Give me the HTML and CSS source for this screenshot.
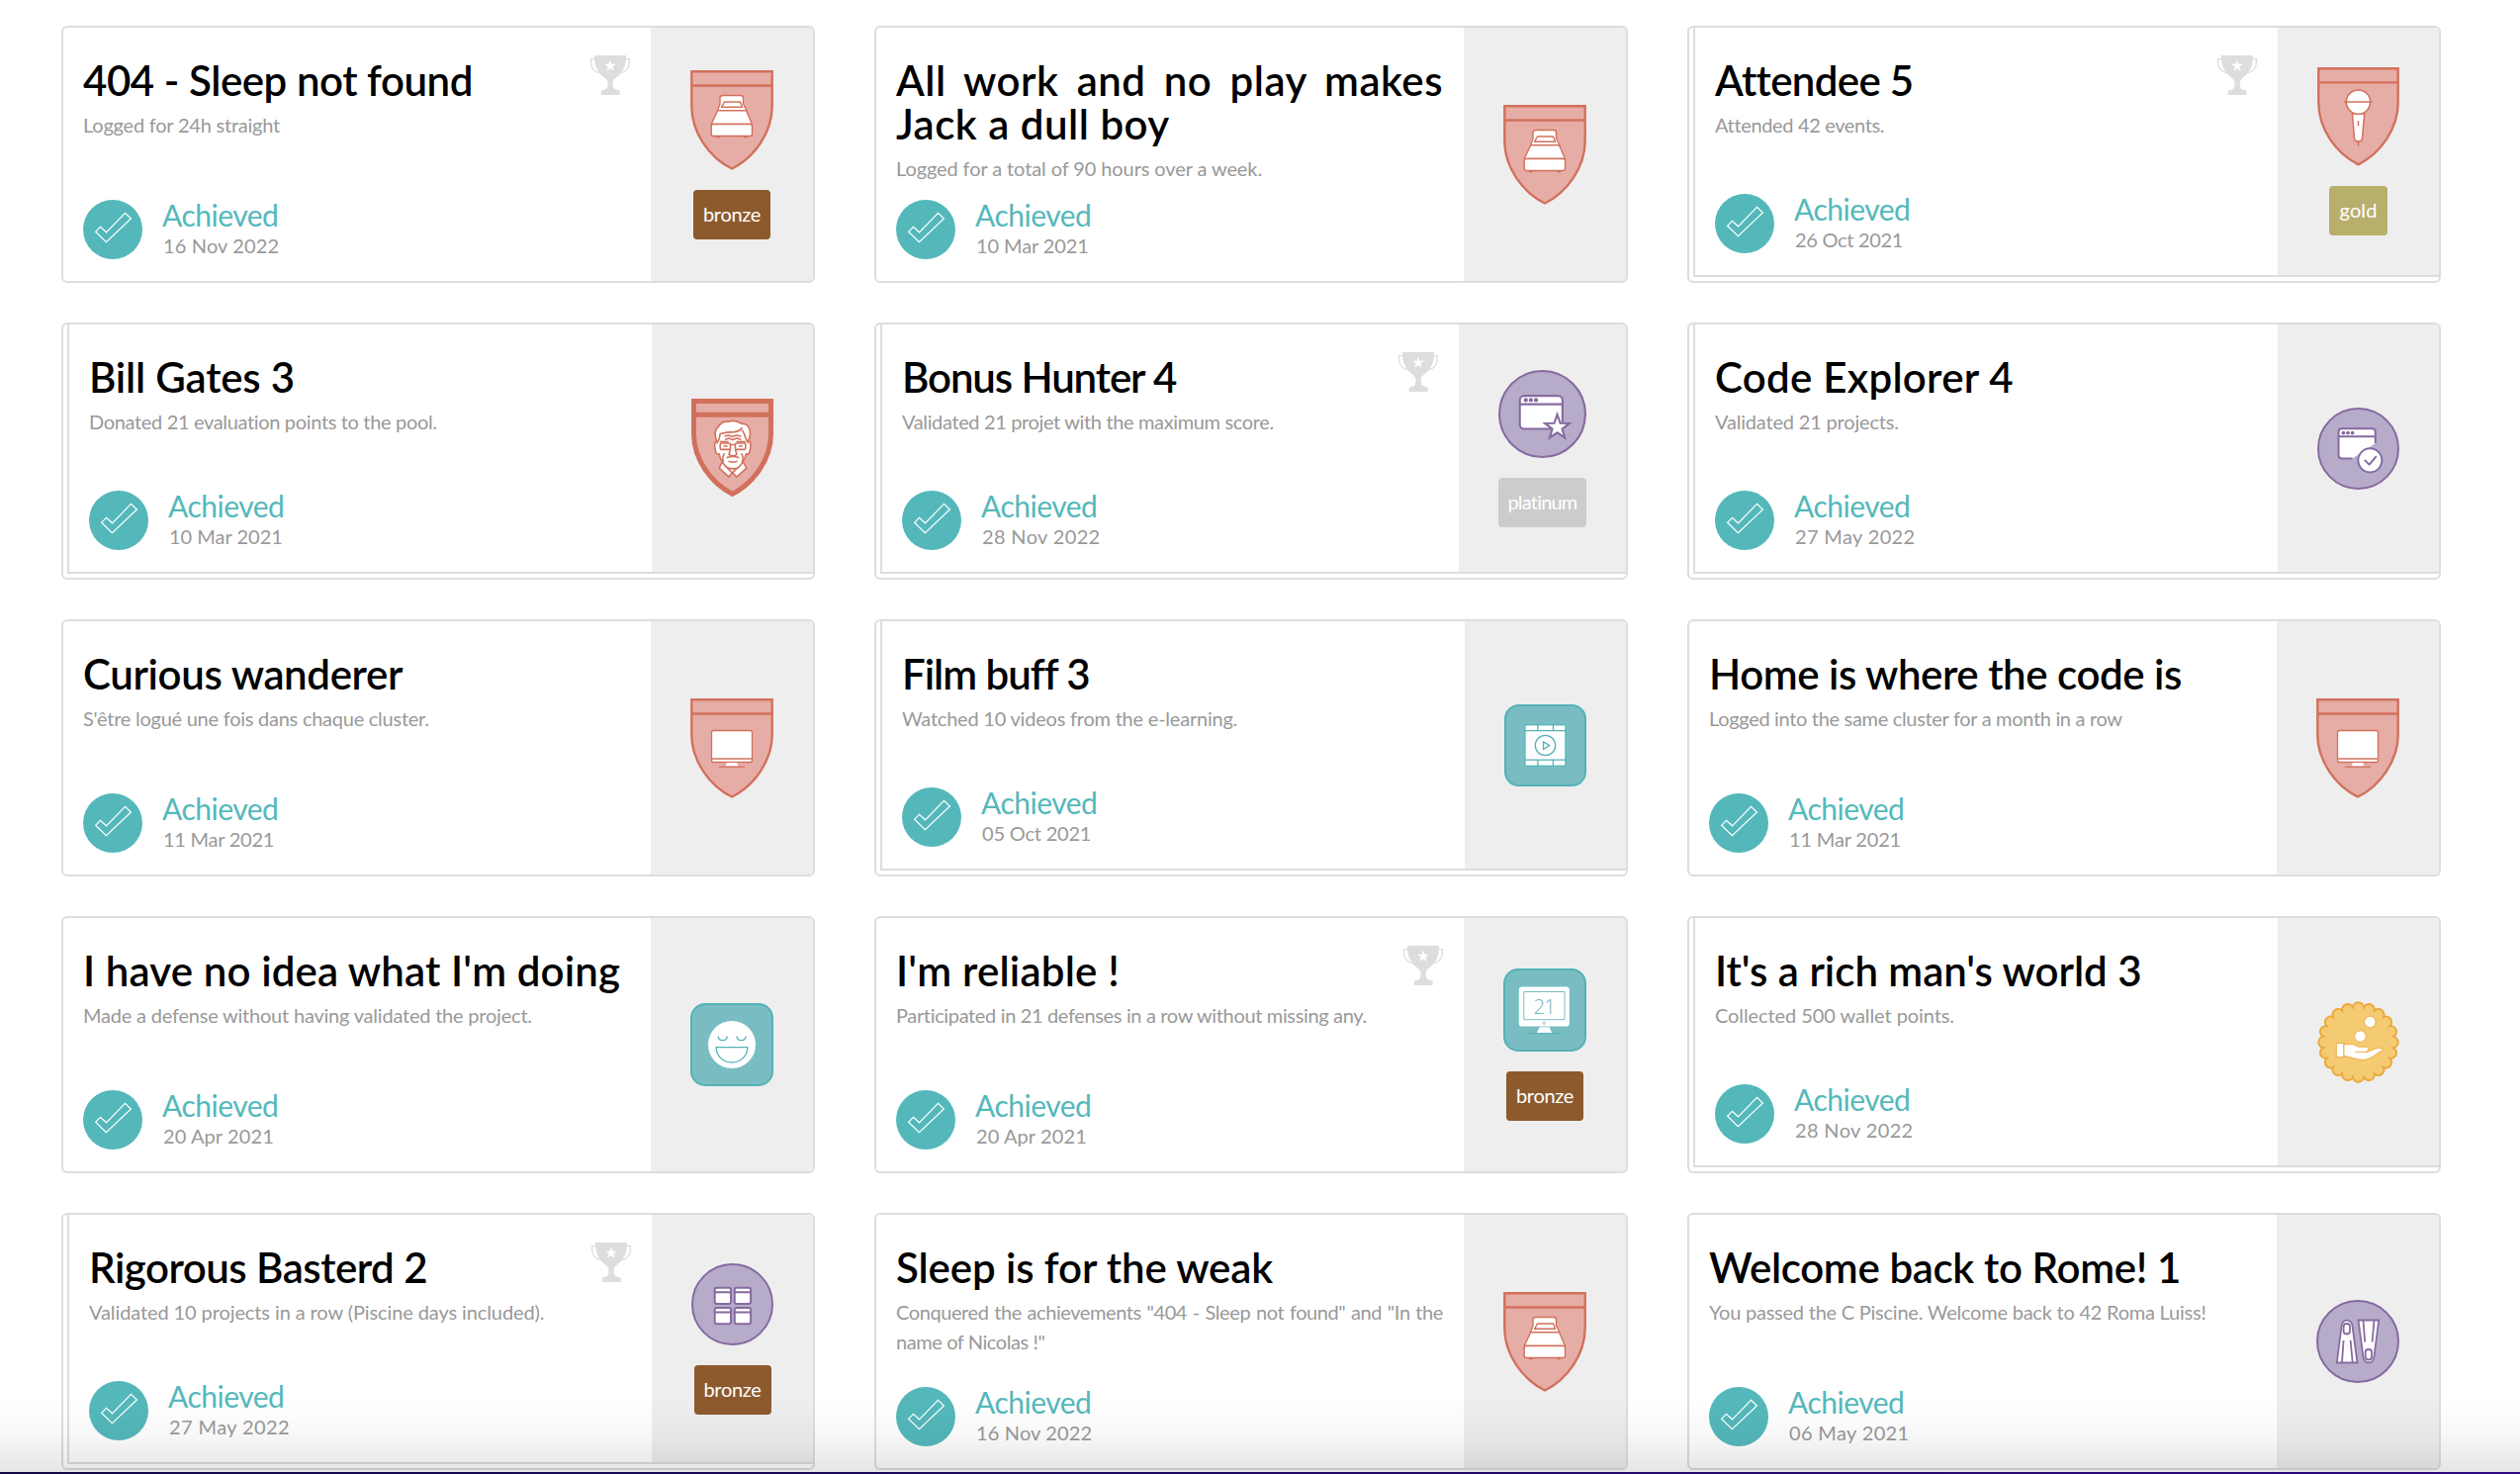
FILE: index.html
```html
<!DOCTYPE html>
<html lang="en">
<head>
<meta charset="utf-8">
<title>Achievements</title>
<link rel="stylesheet" href="styles.css">
</head>
<body>
<svg class="sprite" aria-hidden="true">
  <symbol id="trophy" viewBox="0 0 40 40">
    <path fill="#ddd" d="M4 0H36V3H40V7C40 13 36 17.5 30.5 18.3C27 22.3 22.7 23.5 22.7 28C22.7 33 24 34.8 28 35Q29.7 35.1 29.7 37V40H10.7V37Q10.7 35.1 12.4 35C16.4 34.8 17.5 33 17.5 28C17.5 23.5 13 22.3 9.5 18.3C4 17.5 0 13 0 7V3H4Z"/>
    <path fill="#fff" d="M1.3 4.3H4.2C4.5 9.5 5.8 13 8.5 16.7C4 15.5 1.3 12 1.3 7ZM38.7 4.3H35.8C35.5 9.5 34.2 13 31.5 16.7C36 15.5 38.7 12 38.7 7Z"/>
    <path fill="#fff" d="M20 4.6L21.5 8.7L25.9 8.8L22.4 11.5L23.7 15.7L20 13.2L16.3 15.7L17.6 11.5L14.1 8.8L18.5 8.7Z"/>
  </symbol>
  <symbol id="check" viewBox="0 0 60 60">
    <circle cx="30" cy="30" r="30" fill="#54b8bb"/>
    <path d="M12.6 32.3L17.5 27.3L23.5 32.8L42.5 13.3L48.4 19L23.4 42.6Z" fill="none" stroke="#fff" stroke-width="1.2"/>
  </symbol>
  <symbol id="shield" viewBox="0 0 84 101">
    <path class="badge-red" d="M1.3 1.3H82.7V36C82.7 63 65 88 42 99.5C19 88 1.3 63 1.3 36Z"/>
    <path class="badge-red" d="M1.3 15.5H82.7"/>
  </symbol>
  <symbol id="bed" viewBox="0 0 84 101">
    <use href="#shield"/>
    <g fill="#fff" stroke="#d2705c" stroke-width="1.4" stroke-linejoin="round">
      <path d="M30 34V28Q30 25.5 33 25.500H51Q53.500 25.500 53.500 28V34L57 41H27.500Z"/>
      <path d="M27.700 40.700H56.500L62.500 54.500H21.200Z"/>
      <path d="M34.500 32H50.500L52.500 37.300H31.500Z"/>
      <rect x="21.200" y="54.500" width="41.300" height="12" rx="2"/>
      <path d="M26 67.500H30M54 67.500H58"/>
    </g>
  </symbol>
  <symbol id="mic" viewBox="0 0 84 101">
    <use href="#shield"/>
    <g fill="#fff" stroke="#d2705c" stroke-width="1.500">
      <path d="M42 75V80.500"/>
      <path d="M35.900 47.500H48.300L46 73Q45.500 76 42 76Q38.500 76 38 73Z"/>
      <circle cx="42" cy="35.500" r="12.300"/>
      <path d="M27 35.500H56.500M42 55V60"/>
    </g>
  </symbol>
  <symbol id="imac" viewBox="0 0 84 101">
    <use href="#shield"/>
    <g fill="#fff" stroke="#d2705c" stroke-width="1.300">
      <rect x="21.500" y="32.500" width="41" height="32" rx="2"/>
      <path d="M22 61H62"/>
      <path stroke="none" d="M37 65H47L48.500 68.500H35.500Z"/>
      <path d="M29 69.200H55"/>
    </g>
  </symbol>
  <symbol id="portrait" viewBox="0 0 84 101">
    <g class="badge-red badge-red--bold">
      <path d="M2.500 2.500H81.500V36C81.500 62 64 86 42 97.500C20 86 2.500 62 2.500 36Z"/>
      <path d="M2.500 16.500H81.500"/>
    </g>
    <g fill="#fff" stroke="#d2705c" stroke-width="1.600" stroke-linejoin="round">
      <path d="M31 66L28.500 71L38.500 80L42 75.500L46.500 80L56.500 71L53 65Z"/>
      <path d="M33 67L42 76L51.500 66"/>
      <path d="M26 43Q22.500 45 25 54Q25.500 57.500 28.500 56.500Q30.500 66 37 70.500Q42.500 73 48 70.500Q54 65 56 56.500Q59 58 60 53Q62 44 58.500 43Q62 35 58.500 29Q57 25.500 51 25.500Q45 21 38 23.500Q31 22.500 27.500 29Q22 33 26 43Z"/>
      <path d="M26 46Q29 42 29.500 36Q36 34 44 34Q50 33.500 52 29.500M52 32Q54.500 36 55.500 40L58.500 46" fill="none"/>
      <path d="M34 38.500L38 37.500L42 39L46 37.500L51 38.500M34.500 42L38 40.500L42 42L47 40.500L51 42M29 44H38M46 44H56" fill="none"/>
      <rect x="29.500" y="45.500" width="10.500" height="6.500" rx="1.500"/>
      <rect x="45" y="45.500" width="10.500" height="6.500" rx="1.500"/>
      <path d="M40 47H45M33 48.500H37M48.500 48.500H52.500M40 52L38.500 57Q42.500 60 46.500 57L45 52M36 60.500Q42.500 58 49 60.500M38 64Q42.500 66 47 64M34 56Q31 60 33 65M51 56Q54 60 52 65" fill="none"/>
    </g>
  </symbol>
  <symbol id="round" viewBox="0 0 84 84">
    <circle cx="42" cy="42" r="41" fill="#b7abca" stroke="#866aa0" stroke-width="2"/>
  </symbol>
  <symbol id="window-star" viewBox="0 0 84 84">
    <use href="#round"/>
    <g fill="#fff" stroke="#866aa0" stroke-width="2">
      <rect x="20.500" y="24.700" width="40.700" height="31.500" rx="4"/>
      <path d="M20.500 32.700H61.200"/>
      <path d="M56.200 42.500L59.100 50.800L67.800 50.900L60.900 56.200L63.400 64.600L56.200 59.700L49 64.600L51.500 56.200L44.600 50.900L53.300 50.800Z"/>
    </g>
    <g fill="#866aa0"><circle cx="26.200" cy="28.700" r="2"/><circle cx="31" cy="28.700" r="2"/><circle cx="35.900" cy="28.700" r="2"/></g>
  </symbol>
  <symbol id="window-check" viewBox="0 0 84 84">
    <use href="#round"/>
    <path d="M21.800 49V25Q21.800 21.500 25.300 21.500H56Q59.500 21.500 59.500 25V36.500L36 52H25Q21.800 52 21.800 49Z" fill="#fff"/>
    <path d="M36 52.200H25.300Q21.800 52.200 21.800 48.700V25Q21.800 21.500 25.300 21.500H56Q59.500 21.500 59.500 25V36.500M21.800 29.700H59.500" fill="none" stroke="#866aa0" stroke-width="2"/>
    <g fill="#866aa0"><circle cx="26.700" cy="25.900" r="1.900"/><circle cx="31.300" cy="25.900" r="1.900"/><circle cx="36" cy="25.900" r="1.900"/></g>
    <circle cx="54" cy="54" r="12.200" fill="#fff" stroke="#866aa0" stroke-width="2"/>
    <path d="M48.300 53.500L53.300 58.300L60.500 49.800" fill="none" stroke="#866aa0" stroke-width="2"/>
  </symbol>
  <symbol id="window-grid" viewBox="0 0 84 84">
    <use href="#round"/>
    <g fill="#fff" stroke="#866aa0" stroke-width="2">
      <rect x="24" y="25" width="16.500" height="16.500" rx="2"/><rect x="44.300" y="25" width="16.500" height="16.500" rx="2"/>
      <rect x="24" y="45.500" width="16.500" height="16.500" rx="2"/><rect x="44.300" y="45.500" width="16.500" height="16.500" rx="2"/>
      <path d="M24 29.500H40.500M44.300 29.500H60.800M24 50H40.500M44.300 50H60.800"/>
    </g>
  </symbol>
  <symbol id="fins" viewBox="0 0 84 84">
    <use href="#round"/>
    <g fill="#fff" stroke="#866aa0" stroke-width="1.800">
      <path d="M20.800 63.500L25.500 27C26 18.500 36 18.500 36.600 27L41.500 63.500Z"/>
      <rect x="27.600" y="24" width="6.400" height="10.500" rx="3"/>
      <path d="M27.600 41L26 63M34.600 41L36.700 63"/>
      <path d="M42.500 20.500H63.200L58.500 57C58 65.500 48 65.500 47.400 57Z"/>
      <rect x="49.700" y="50" width="6.400" height="10.500" rx="3"/>
      <path d="M47.500 21L49.200 42.500M58.500 21L56.600 42.500"/>
    </g>
  </symbol>
  <symbol id="square" viewBox="0 0 84 84">
    <rect x="1" y="1" width="82" height="82" rx="14" fill="#79bdc2" stroke="#54b2b7" stroke-width="2"/>
  </symbol>
  <symbol id="film" viewBox="0 0 84 84">
    <use href="#square"/>
    <g fill="#fff" stroke="#54b2b7" stroke-width="1.300">
      <rect x="21.200" y="21" width="41.500" height="42"/>
      <path d="M21 27H63M21 56.800H63M34.300 21V27M50 21V27M34.300 56.800V63M50 56.800V63"/>
      <circle cx="42" cy="42" r="10.300"/>
      <path d="M40 38.300L46.200 42L40 45.800Z"/>
    </g>
  </symbol>
  <symbol id="smile" viewBox="0 0 84 84">
    <use href="#square"/>
    <circle cx="42" cy="42" r="24" fill="#fff"/>
    <path d="M28.200 33.500C28.500 39 37 39 37.300 33.500M47 33.500C47.300 39 55.700 39 56 33.500M26.200 44.700H57.800C57.500 65 26.500 65 26.200 44.700Z" fill="none" stroke="#54b2b7" stroke-width="1.300"/>
  </symbol>
  <symbol id="monitor" viewBox="0 0 84 84">
    <use href="#square"/>
    <rect x="15.800" y="18.500" width="51" height="40" rx="3" fill="#fff"/>
    <path d="M20.800 23.500H62V51.700H20.800Z" fill="none" stroke="#79bdc2"/>
    <circle cx="41.300" cy="55.200" r="1.200" fill="none" stroke="#79bdc2" stroke-width=".8"/>
    <path d="M36.700 59.300H46.700L49 65H34Z" fill="#fff"/>
    <path d="M25 65.500H57.700" stroke="#54b2b7"/>
    <text class="monitor-text" x="41.300" y="46" text-anchor="middle">21</text>
  </symbol>
  <symbol id="wallet" viewBox="0 0 84 84">
    <path fill="#f4ca72" stroke="#eba93a" stroke-width="2" d="M36.320 6.150A5.750 5.750 0 0 1 47.680 6.150A5.750 5.750 0 0 1 58.480 9.660A5.750 5.750 0 0 1 67.670 16.330A5.750 5.750 0 0 1 74.340 25.520A5.750 5.750 0 0 1 77.850 36.320A5.750 5.750 0 0 1 77.850 47.680A5.750 5.750 0 0 1 74.340 58.480A5.750 5.750 0 0 1 67.670 67.670A5.750 5.750 0 0 1 58.480 74.340A5.750 5.750 0 0 1 47.680 77.850A5.750 5.750 0 0 1 36.320 77.850A5.750 5.750 0 0 1 25.520 74.340A5.750 5.750 0 0 1 16.330 67.670A5.750 5.750 0 0 1 9.660 58.480A5.750 5.750 0 0 1 6.150 47.680A5.750 5.750 0 0 1 6.150 36.320A5.750 5.750 0 0 1 9.660 25.520A5.750 5.750 0 0 1 16.330 16.330A5.750 5.750 0 0 1 25.520 9.660A5.750 5.750 0 0 1 36.320 6.150Z"/>
    <g fill="#fff" stroke="#eba93a" stroke-width=".9">
      <circle cx="54" cy="21.300" r="5.800"/>
      <circle cx="44" cy="36" r="5.800"/>
      <rect x="19.500" y="43" width="7.800" height="14.300"/>
      <path d="M27.300 44.300H36C39 44.300 40 46.800 43 46.800H50Q52.500 46.800 52.500 49.300Q52.500 51.300 50 52C54 51.500 58 48.300 63 48Q66.500 48 67.200 50C61 53 55 59.500 48 60C41 60.500 34 57 27.300 56Z"/>
      <path d="M38.500 52H51"/>
    </g>
  </symbol>
</svg>

<main class="grid">
  <article class="card">
    <div class="face">
      <div class="body">
        <div class="head"><div class="text"><h2 class="title">404 - Sleep not found</h2><p class="desc">Logged for 24h straight</p></div><svg class="trophy"><use href="#trophy"/></svg></div>
        <div class="status"><svg class="check"><use href="#check"/></svg><div><div class="state">Achieved</div><time class="date">16 Nov 2022</time></div></div>
      </div>
      <div class="side"><svg class="icon" viewBox="0 0 84 101"><use href="#bed"/></svg><span class="tag bronze">bronze</span></div>
    </div>
  </article>
  <article class="card">
    <div class="face">
      <div class="body">
        <div class="head"><div class="text"><h2 class="title">All work and no play makes Jack a dull boy</h2><p class="desc">Logged for a total of 90 hours over a week.</p></div></div>
        <div class="status"><svg class="check"><use href="#check"/></svg><div><div class="state">Achieved</div><time class="date">10 Mar 2021</time></div></div>
      </div>
      <div class="side"><svg class="icon" viewBox="0 0 84 101"><use href="#bed"/></svg></div>
    </div>
  </article>
  <article class="card stacked">
    <div class="face">
      <div class="body">
        <div class="head"><div class="text"><h2 class="title">Attendee 5</h2><p class="desc">Attended 42 events.</p></div><svg class="trophy"><use href="#trophy"/></svg></div>
        <div class="status"><svg class="check"><use href="#check"/></svg><div><div class="state">Achieved</div><time class="date">26 Oct 2021</time></div></div>
      </div>
      <div class="side"><svg class="icon" viewBox="0 0 84 101"><use href="#mic"/></svg><span class="tag gold">gold</span></div>
    </div>
  </article>
  <article class="card stacked">
    <div class="face">
      <div class="body">
        <div class="head"><div class="text"><h2 class="title">Bill Gates 3</h2><p class="desc">Donated 21 evaluation points to the pool.</p></div></div>
        <div class="status"><svg class="check"><use href="#check"/></svg><div><div class="state">Achieved</div><time class="date">10 Mar 2021</time></div></div>
      </div>
      <div class="side"><svg class="icon" viewBox="0 0 84 101"><use href="#portrait"/></svg></div>
    </div>
  </article>
  <article class="card stacked wide">
    <div class="face">
      <div class="body">
        <div class="head"><div class="text"><h2 class="title">Bonus Hunter 4</h2><p class="desc">Validated 21 projet with the maximum score.</p></div><svg class="trophy"><use href="#trophy"/></svg></div>
        <div class="status"><svg class="check"><use href="#check"/></svg><div><div class="state">Achieved</div><time class="date">28 Nov 2022</time></div></div>
      </div>
      <div class="side"><svg class="icon" viewBox="0 0 84 84"><use href="#window-star"/></svg><span class="tag platinum">platinum</span></div>
    </div>
  </article>
  <article class="card stacked">
    <div class="face">
      <div class="body">
        <div class="head"><div class="text"><h2 class="title">Code Explorer 4</h2><p class="desc">Validated 21 projects.</p></div></div>
        <div class="status"><svg class="check"><use href="#check"/></svg><div><div class="state">Achieved</div><time class="date">27 May 2022</time></div></div>
      </div>
      <div class="side"><svg class="icon" viewBox="0 0 84 84"><use href="#window-check"/></svg></div>
    </div>
  </article>
  <article class="card">
    <div class="face">
      <div class="body">
        <div class="head"><div class="text"><h2 class="title">Curious wanderer</h2><p class="desc">S'être logué une fois dans chaque cluster.</p></div></div>
        <div class="status"><svg class="check"><use href="#check"/></svg><div><div class="state">Achieved</div><time class="date">11 Mar 2021</time></div></div>
      </div>
      <div class="side"><svg class="icon" viewBox="0 0 84 101"><use href="#imac"/></svg></div>
    </div>
  </article>
  <article class="card stacked">
    <div class="face">
      <div class="body">
        <div class="head"><div class="text"><h2 class="title">Film buff 3</h2><p class="desc">Watched 10 videos from the e-learning.</p></div></div>
        <div class="status"><svg class="check"><use href="#check"/></svg><div><div class="state">Achieved</div><time class="date">05 Oct 2021</time></div></div>
      </div>
      <div class="side"><svg class="icon" viewBox="0 0 84 84"><use href="#film"/></svg></div>
    </div>
  </article>
  <article class="card">
    <div class="face">
      <div class="body">
        <div class="head"><div class="text"><h2 class="title">Home is where the code is</h2><p class="desc">Logged into the same cluster for a month in a row</p></div></div>
        <div class="status"><svg class="check"><use href="#check"/></svg><div><div class="state">Achieved</div><time class="date">11 Mar 2021</time></div></div>
      </div>
      <div class="side"><svg class="icon" viewBox="0 0 84 101"><use href="#imac"/></svg></div>
    </div>
  </article>
  <article class="card">
    <div class="face">
      <div class="body">
        <div class="head"><div class="text"><h2 class="title">I have no idea what I'm doing</h2><p class="desc">Made a defense without having validated the project.</p></div></div>
        <div class="status"><svg class="check"><use href="#check"/></svg><div><div class="state">Achieved</div><time class="date">20 Apr 2021</time></div></div>
      </div>
      <div class="side"><svg class="icon" viewBox="0 0 84 84"><use href="#smile"/></svg></div>
    </div>
  </article>
  <article class="card">
    <div class="face">
      <div class="body">
        <div class="head"><div class="text"><h2 class="title">I'm reliable !</h2><p class="desc">Participated in 21 defenses in a row without missing any.</p></div><svg class="trophy"><use href="#trophy"/></svg></div>
        <div class="status"><svg class="check"><use href="#check"/></svg><div><div class="state">Achieved</div><time class="date">20 Apr 2021</time></div></div>
      </div>
      <div class="side"><svg class="icon" viewBox="0 0 84 84"><use href="#monitor"/></svg><span class="tag bronze">bronze</span></div>
    </div>
  </article>
  <article class="card stacked">
    <div class="face">
      <div class="body">
        <div class="head"><div class="text"><h2 class="title">It's a rich man's world 3</h2><p class="desc">Collected 500 wallet points.</p></div></div>
        <div class="status"><svg class="check"><use href="#check"/></svg><div><div class="state">Achieved</div><time class="date">28 Nov 2022</time></div></div>
      </div>
      <div class="side"><svg class="icon" viewBox="0 0 84 84"><use href="#wallet"/></svg></div>
    </div>
  </article>
  <article class="card stacked">
    <div class="face">
      <div class="body">
        <div class="head"><div class="text"><h2 class="title">Rigorous Basterd 2</h2><p class="desc">Validated 10 projects in a row (Piscine days included).</p></div><svg class="trophy"><use href="#trophy"/></svg></div>
        <div class="status"><svg class="check"><use href="#check"/></svg><div><div class="state">Achieved</div><time class="date">27 May 2022</time></div></div>
      </div>
      <div class="side"><svg class="icon" viewBox="0 0 84 84"><use href="#window-grid"/></svg><span class="tag bronze">bronze</span></div>
    </div>
  </article>
  <article class="card">
    <div class="face">
      <div class="body">
        <div class="head"><div class="text"><h2 class="title">Sleep is for the weak</h2><p class="desc">Conquered the achievements "404 - Sleep not found" and "In the name of Nicolas !"</p></div></div>
        <div class="status"><svg class="check"><use href="#check"/></svg><div><div class="state">Achieved</div><time class="date">16 Nov 2022</time></div></div>
      </div>
      <div class="side"><svg class="icon" viewBox="0 0 84 101"><use href="#bed"/></svg></div>
    </div>
  </article>
  <article class="card">
    <div class="face">
      <div class="body">
        <div class="head"><div class="text"><h2 class="title">Welcome back to Rome! 1</h2><p class="desc">You passed the C Piscine. Welcome back to 42 Roma Luiss!</p></div></div>
        <div class="status"><svg class="check"><use href="#check"/></svg><div><div class="state">Achieved</div><time class="date">06 May 2021</time></div></div>
      </div>
      <div class="side"><svg class="icon" viewBox="0 0 84 84"><use href="#fins"/></svg></div>
    </div>
  </article>
</main>
<div class="bottom-edge"></div>
</body>
</html>
```
FILE: styles.css
```css
* { box-sizing: border-box; margin: 0; padding: 0; }

html, body { height: 1490px; overflow: hidden; background: #fff; }

body {
  position: relative;
  font-family: "Futura PT", Futura, Lato, sans-serif;
  color: #000;
}

.sprite { display: none; }

.grid {
  display: grid;
  grid-template-columns: repeat(3, 762px);
  grid-auto-rows: 260px;
  gap: 40px 60px;
  padding: 26px 0 0 62px;
}

.card {
  display: flex;
  border: 2px solid #ddd;
  border-radius: 6px;
  overflow: hidden;
  --title-track: -.3px;
  --desc-track: -.2px;
  --date-track: 0px;
}

.card.stacked { padding: 0 0 4px 4px; }

.face { display: flex; flex: 1; min-width: 0; }

.stacked .face {
  border: solid #ddd;
  border-width: 0 0 2px 2px;
}

.body {
  display: flex;
  flex: 1;
  flex-direction: column;
  justify-content: space-between;
  min-width: 0;
  padding: 28px 21px 22px 20px;
}

.head { display: flex; gap: 16px; }

.text { flex: 1; min-width: 0; padding-top: 3px; }

.title {
  font-size: 42px;
  font-weight: 600;
  line-height: 44px;
  letter-spacing: var(--title-track);
  text-align: justify;
}

.desc {
  margin-top: 8px;
  font-size: 20px;
  line-height: 30px;
  letter-spacing: var(--desc-track);
  color: #999;
  text-align: justify;
}

.trophy { flex: none; width: 40px; height: 40px; }

.status { display: flex; align-items: center; gap: 20px; height: 60px; }

.check { flex: none; width: 60px; height: 60px; }

.state {
  font-size: 30px;
  line-height: 34px;
  letter-spacing: -.5px;
  color: #54b8bb;
}

.date {
  display: block;
  margin: -1px 0 1px;
  padding-left: 1px;
  font-size: 20px;
  line-height: 30px;
  letter-spacing: var(--date-track);
  color: #999;
}

.side {
  display: flex;
  flex: 0 0 164px;
  flex-direction: column;
  align-items: center;
  justify-content: center;
  gap: 20px;
  background: #eee;
}

.stacked .side { flex-basis: 163px; }
.stacked.wide .side { flex-basis: 169px; }

.icon { width: 84px; }
.stacked .icon { width: 83px; }
.stacked.wide .icon { width: 89px; }

.tag {
  height: 50px;
  border-radius: 4px;
  font-size: 20px;
  line-height: 49px;
  text-align: center;
  color: #fff;
}

.bronze { width: 78px; background: #8c5a2d; letter-spacing: -.3px; }
.gold { width: 59px; background: #b8af6d; letter-spacing: .1px; }
.platinum { width: 89px; background: #ccc; letter-spacing: -.8px; }

.badge-red { fill: #e5ada5; stroke: #d2705c; stroke-width: 2.4; }
.badge-red--bold { stroke-width: 5; }

.monitor-text {
  font: 300 20.5px "Open Sans", sans-serif;
  letter-spacing: -1px;
  fill: #6cb8bd;
}

/* tracking per card */
.card:nth-child(1) { --title-track: -.44px; --desc-track: -.22px; --date-track: .15px; }
.card:nth-child(2) { --title-track: .5px; --desc-track: -.1px; --date-track: -.1px; }
.card:nth-child(3) { --title-track: -.65px; --desc-track: -.35px; --date-track: -.3px; }
.card:nth-child(4) { --title-track: -.2px; --desc-track: -.34px; --date-track: 0px; }
.card:nth-child(5) { --title-track: -1.1px; --desc-track: -.36px; --date-track: .35px; }
.card:nth-child(6) { --title-track: .27px; --desc-track: -.18px; --date-track: .35px; }
.card:nth-child(7) { --title-track: -.36px; --desc-track: -.25px; --date-track: -.25px; }
.card:nth-child(8) { --title-track: -1px; --desc-track: -.22px; --date-track: -.2px; }
.card:nth-child(9) { --title-track: -.44px; --desc-track: -.32px; --date-track: -.17px; }
.card:nth-child(10) { --title-track: .13px; --desc-track: -.21px; --date-track: .1px; }
.card:nth-child(11) { --title-track: .2px; --desc-track: -.35px; --date-track: .1px; }
.card:nth-child(12) { --title-track: -.02px; --desc-track: -.08px; --date-track: .35px; }
.card:nth-child(13) { --title-track: -.49px; --desc-track: -.1px; --date-track: .4px; }
.card:nth-child(14) { --title-track: -.1px; --desc-track: -.42px; --date-track: .15px; }
.card:nth-child(15) { --title-track: -.35px; --desc-track: -.23px; --date-track: .35px; }

/* shadowed strip along the bottom of the window */
.bottom-edge {
  position: absolute;
  inset: auto 0 0 0;
  height: 74px;
  border: solid;
  border-image: linear-gradient(to right, #120a48, #2d0a80) 1;
  border-width: 0 0 2px;
  background: linear-gradient(to bottom, rgba(0, 0, 0, 0), rgba(0, 0, 0, .03) 50%, rgba(0, 0, 0, .1));
}
```
